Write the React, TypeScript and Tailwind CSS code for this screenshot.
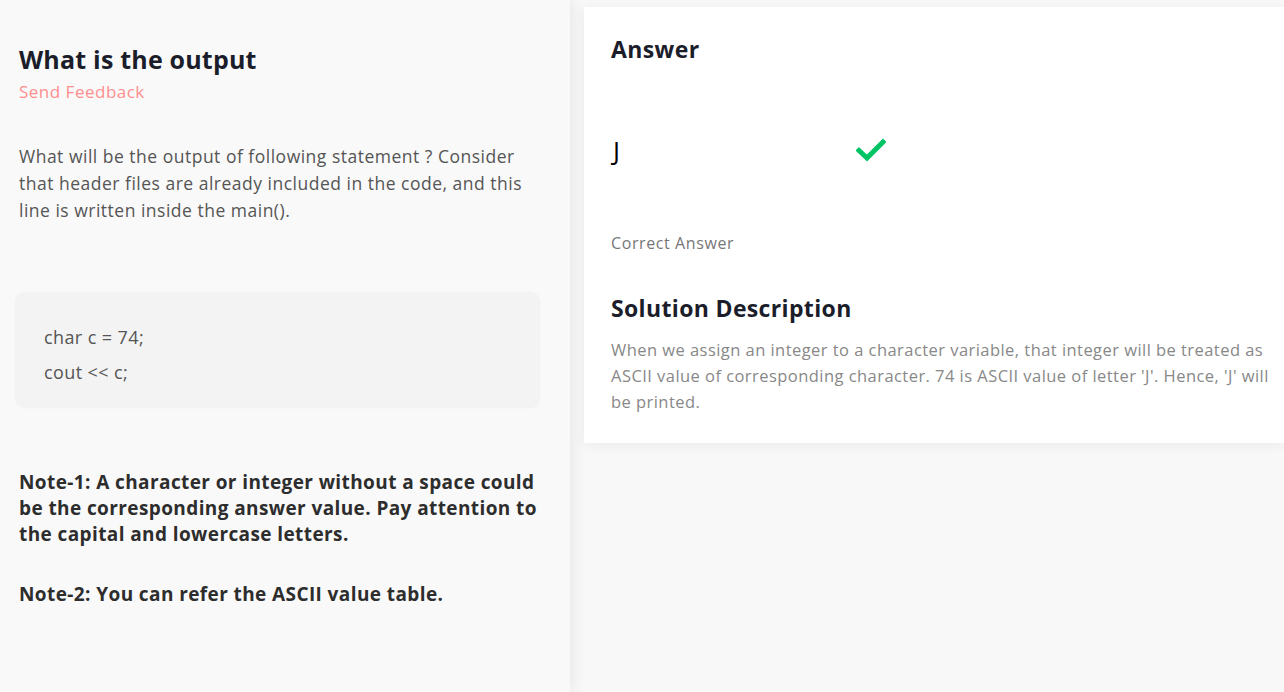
import React from "react";

const font = { fontFamily: "'Open Sans', 'Noto Sans', sans-serif" };

export default function App() {
  return (
    <div className="w-[1284px] h-[692px] flex bg-[#f9f9f9] overflow-hidden text-[#4a4a4a]" style={font}>
      <div className="w-[570px] h-full shrink-0 bg-[#f9f9f9] shadow-[3px_0_14px_rgba(0,0,0,0.07)] relative z-10 pl-[19px] pr-[20px] pt-[43px]">
        <h1 className="text-[25px] leading-[32px] font-bold tracking-[0.2px] text-[#1b1d2a]">What is the output</h1>
        <div className="text-[17px] leading-[22px] tracking-[0.5px] text-[#ff8f8f] mt-[6px]">Send Feedback</div>
        <p className="mt-[40px] w-[510px] text-[17.5px] leading-[27px] tracking-[0.5px] text-[#555]">
          What will be the output of following statement ? Consider that header files are already included in the code, and this line is written inside the main().
        </p>
        <div className="mt-[68px] -ml-[4px] w-[525px] h-[116px] rounded-[10px] bg-[#f3f3f3] shadow-[0_0_3px_rgba(0,0,0,0.03)] pl-[29px] pt-[33px] text-[18px] tracking-[0.4px] text-[#555]">
          <div className="leading-[24px]">char c = 74;</div>
          <div className="leading-[24px] mt-[11px]">cout &lt;&lt; c;</div>
        </div>
        <p className="mt-[61px] w-[530px] text-[19px] leading-[26px] font-bold tracking-[0.4px] text-[#2d2d2d]">
          Note-1: A character or integer without a space could be the corresponding answer value. Pay attention to the capital and lowercase letters.
        </p>
        <p className="mt-[34px] text-[19px] leading-[26px] font-bold tracking-[0.4px] text-[#2d2d2d]">
          Note-2: You can refer the ASCII value table.
        </p>
      </div>
      <div className="flex-1 pt-[7px] pl-[14px] bg-[#f8f8f8]">
        <div className="h-[436px] bg-white shadow-[0_2px_12px_rgba(0,0,0,0.06)] pl-[27px] pt-[27px]">
          <h2 className="text-[23px] leading-[30px] font-bold tracking-[0.4px] text-[#1b1d2a]">Answer</h2>
          <div className="mt-[73px] flex items-center h-[30px]">
            <span className="w-[245px] text-[26px] leading-[30px] text-black pl-[2px] pb-[4px]">J</span>
            <svg width="30" height="24" viewBox="0 0 30 24" className="-mt-[4px]">
              <path d="M3 12.5 L11 20 L27 4" fill="none" stroke="#00c364" strokeWidth="5" strokeLinecap="square" />
            </svg>
          </div>
          <div className="mt-[65px] text-[16px] leading-[22px] tracking-[0.6px] text-[#777]">Correct Answer</div>
          <h2 className="mt-[39px] text-[23px] leading-[30px] font-bold tracking-[0.35px] text-[#1b1d2a]">Solution Description</h2>
          <p className="mt-[14px] pr-[12px] text-[16.5px] leading-[26px] tracking-[0.45px] text-[#888]">
            When we assign an integer to a character variable, that integer will be treated as ASCII value of corresponding character. 74 is ASCII value of letter 'J'. Hence, 'J' will be printed.
          </p>
        </div>
      </div>
    </div>
  );
}
